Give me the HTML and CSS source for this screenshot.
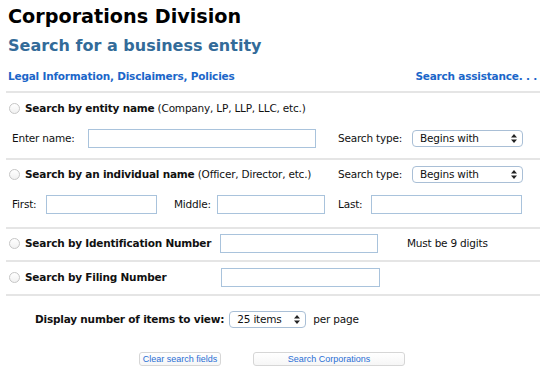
FILE: index.html
```html
<!DOCTYPE html>
<html>
<head>
<meta charset="utf-8">
<link rel="stylesheet" href="styles.css">
</head>
<body>
<div class="page">
  <h1 class="title">Corporations Division</h1>
  <h2 class="subtitle">Search for a business entity</h2>
  <div class="links">
    <a class="link" href="#">Legal Information, Disclaimers, Policies</a>
    <a class="link" href="#">Search assistance. . .</a>
  </div>

  <div class="section sec1">
    <div class="row">
      <label class="head"><span class="radio"></span><b>Search by entity name</b>&nbsp;(Company, LP, LLP, LLC, etc.)</label>
    </div>
    <div class="row fields">
      <span class="lbl lbl-name">Enter name:</span>
      <span class="input w-name"></span>
      <span class="lbl lbl-type">Search type:</span>
      <span class="select w-type">Begins with<svg class="arrows" width="6" height="9" viewBox="0 0 6 9"><path d="M3 0L6 3.5H0Z M3 9L6 5.5H0Z" fill="#222"/></svg></span>
    </div>
  </div>

  <div class="section sec2">
    <div class="row">
      <label class="head head-ind"><span class="radio"></span><b>Search by an individual name</b>&nbsp;(Officer, Director, etc.)</label>
      <span class="lbl lbl-type">Search type:</span>
      <span class="select w-type">Begins with<svg class="arrows" width="6" height="9" viewBox="0 0 6 9"><path d="M3 0L6 3.5H0Z M3 9L6 5.5H0Z" fill="#222"/></svg></span>
    </div>
    <div class="row fields">
      <span class="lbl lbl-first">First:</span>
      <span class="input w-first"></span>
      <span class="lbl lbl-middle">Middle:</span>
      <span class="input w-middle"></span>
      <span class="lbl lbl-last">Last:</span>
      <span class="input w-last"></span>
    </div>
  </div>

  <div class="section sec3">
    <div class="row">
      <label class="head head-id"><span class="radio"></span><b>Search by Identification Number</b></label>
      <span class="input w-id"></span>
      <span class="note">Must be 9 digits</span>
    </div>
  </div>

  <div class="section sec4">
    <div class="row">
      <label class="head head-filing"><span class="radio"></span><b>Search by Filing Number</b></label>
      <span class="input w-filing"></span>
    </div>
  </div>

  <div class="row display">
    <b>Display number of items to view:</b>
    <span class="select w-items">25 items<svg class="arrows" width="6" height="9" viewBox="0 0 6 9"><path d="M3 0L6 3.5H0Z M3 9L6 5.5H0Z" fill="#222"/></svg></span>
    <span class="perpage">per page</span>
  </div>

  <div class="buttons">
    <button class="btn btn-clear">Clear search fields</button>
    <button class="btn btn-search">Search Corporations</button>
  </div>
</div>
</body>
</html>
```

FILE: styles.css
```css
html, body {
  margin: 0;
  padding: 0;
  background: #ffffff;
}
body {
  font-family: "DejaVu Sans", Verdana, sans-serif;
  font-size: 10.5px;
  letter-spacing: -0.2px;
  color: #111;
}
.page {
  width: 534px;
  padding-left: 6px;
}
.title {
  margin: 0;
  padding: 5px 0 0 2px;
  font-size: 19.2px;
  line-height: 24px;
  font-weight: bold;
  letter-spacing: 0;
  color: #000;
}
.subtitle {
  margin: 0;
  padding: 7px 0 0 2px;
  font-size: 16px;
  line-height: 20px;
  font-weight: bold;
  letter-spacing: 0;
  color: #336b99;
}
.links {
  display: flex;
  justify-content: space-between;
  padding: 13px 3px 0 2px;
  height: 22px;
  border-bottom: 2px solid #e5e5e5;
}
.link {
  font-weight: bold;
  color: #1b66c9;
  text-decoration: none;
  line-height: 14px;
}
.section {
  border-bottom: 2px solid #e5e5e5;
}
.row {
  display: flex;
  align-items: center;
  height: 20px;
}
.row > * { flex-shrink: 0; }
.sec1 { padding: 5px 0 10px; }
.sec1 .fields { margin-top: 10px; }
.sec2 { padding: 4px 0 13px; }
.sec2 .fields { margin-top: 10px; }
.sec3 { padding: 4px 0 7px; }
.sec4 { padding: 5px 0 7px; }
.head {
  display: flex;
  align-items: center;
  white-space: nowrap;
}
.radio {
  display: inline-block;
  flex-shrink: 0;
  width: 9px;
  height: 9px;
  border: 1px solid #c6c6c6;
  border-radius: 50%;
  background: linear-gradient(#ffffff, #f1f1f1);
  margin: 0 5px 0 3px;
}
.head-ind { width: 332px; }
.head-id { width: 214px; }
.head-filing { width: 215px; }
.lbl { white-space: nowrap; }
.lbl-name { width: 76px; padding-left: 6px; }
.lbl-type { width: 74px; }
.w-name + .lbl-type { margin-left: 22px; }
.lbl-first { width: 34px; padding-left: 6px; }
.lbl-middle { width: 43px; margin-left: 17px; }
.lbl-last { width: 33px; margin-left: 13px; }
.input {
  display: inline-block;
  box-sizing: border-box;
  height: 19px;
  border: 1px solid #a9c3dc;
  background: #fff;
}
.w-name { width: 228px; }
.w-first { width: 111px; }
.w-middle { width: 108px; }
.w-last { width: 151px; }
.w-id { width: 158px; }
.w-filing { width: 159px; }
.note { margin-left: 29px; }
.select {
  position: relative;
  display: inline-flex;
  align-items: center;
  box-sizing: border-box;
  height: 17px;
  padding-left: 7px;
  border: 1px solid #a9bfd6;
  border-radius: 4px;
  background: #fff;
  color: #111;
}
.arrows {
  position: absolute;
  right: 5px;
  top: 3px;
}
.w-type { width: 111px; }
.w-items { width: 77px; margin-left: 5px; }
.display {
  padding-left: 29px;
  margin-top: 13px;
}
.perpage { margin-left: 7px; }
.buttons {
  display: flex;
  margin-top: 23px;
  padding-left: 133px;
}
.btn {
  box-sizing: border-box;
  height: 14px;
  padding: 0;
  border: 1px solid #d6d6d6;
  border-radius: 3px;
  background: linear-gradient(#ffffff, #f6f6f6);
  font-family: "Liberation Sans", Arial, sans-serif;
  font-size: 9px;
  letter-spacing: 0;
  line-height: 12px;
  color: #2a6fd5;
}
.btn-clear { width: 82px; }
.btn-search { width: 152px; margin-left: 32px; }
```
